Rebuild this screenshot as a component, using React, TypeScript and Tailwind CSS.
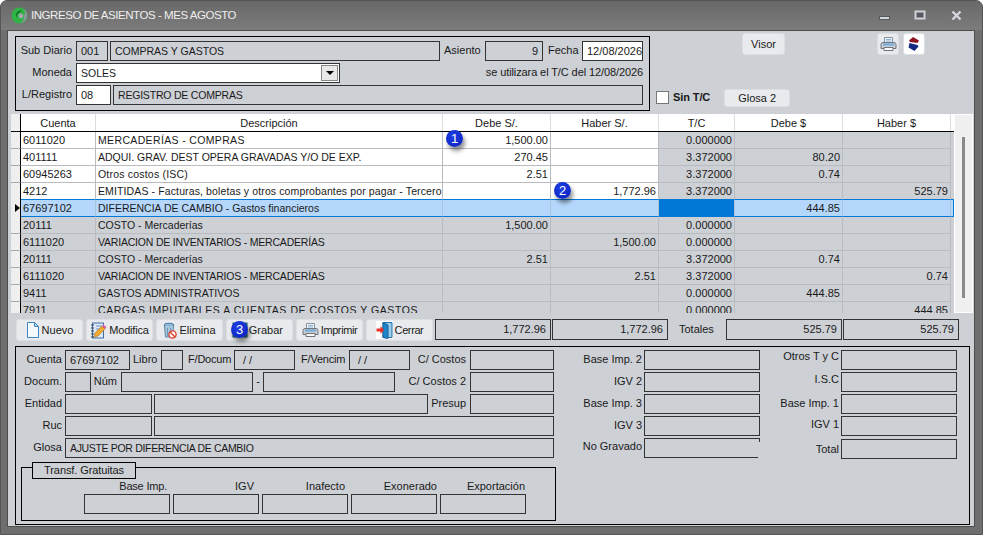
import type { ReactNode } from "react"

interface BoxProps {
  className?: string
  children?: ReactNode
}

function Box({ className = "", children }: BoxProps) {
  return (
    <div className={`flex h-5 shrink-0 items-center overflow-hidden whitespace-nowrap border border-[#333] px-1 ${className}`}>
      {children}
    </div>
  )
}

function Lbl({ className = "", children }: BoxProps) {
  return <div className={`shrink-0 -translate-y-px whitespace-nowrap ${className}`}>{children}</div>
}

function Marker({ n, className = "" }: { n: number; className?: string }) {
  return (
    <div
      className={`absolute z-10 flex h-[17px] w-[17px] items-center justify-center rounded-full bg-[radial-gradient(circle_at_40%_35%,#1d3fe6,#0a1fb8)] text-[13px] leading-none text-white shadow-[2px_4px_4px_rgba(0,0,0,0.45)] ${className}`}
    >
      {n}
    </div>
  )
}

function LogoIcon() {
  return (
    <svg width="17" height="17" viewBox="0 0 17 17">
      <circle cx="8.5" cy="8.5" r="8" fill="#2fb344" />
      <path d="M9 1a7.5 7.5 0 0 1 7 7.5A7.5 7.5 0 0 1 8 16a6 6 0 0 0 5-7 5 5 0 0 0-4-8z" fill="#8f979c" />
      <path d="M5 8a5 5 0 0 1 7-4 4 4 0 0 0-4 1.500A4 4 0 0 0 7 12a5 5 0 0 1-2-4z" fill="#0d5a2a" />
      <circle cx="10" cy="9" r="2.400" fill="#a4aaaf" />
    </svg>
  )
}

function PageIcon() {
  return (
    <svg width="14" height="16" viewBox="0 0 14 16">
      <path d="M1.500.5h7l4 4v11h-11z" fill="#f4f9fe" stroke="#3f86c6" />
      <path d="M8.500.5v4h4z" fill="#bcdcf5" stroke="#3f86c6" />
    </svg>
  )
}

function NotebookIcon() {
  return (
    <svg width="17" height="17" viewBox="0 0 17 17">
      <rect x="2.500" y="1" width="11" height="15" fill="#dbe9f6" stroke="#3c6fa8" />
      <path d="M1 3h3M1 6h3M1 9h3M1 12h3M1 15h3" stroke="#345" strokeWidth="1" />
      <path d="M6 4h6M6 7h4" stroke="#6c93bd" />
      <path d="M4 15l1-4 7-7 3 3-7 7z" fill="#f0a92e" stroke="#b0701a" strokeWidth=".6" />
      <path d="M12 4l1.500-1.500 3 3L15 7z" fill="#d65ca8" />
    </svg>
  )
}

function BinIcon() {
  return (
    <svg width="14" height="17" viewBox="0 0 14 17">
      <ellipse cx="6" cy="3" rx="5" ry="1.800" fill="#8db7d6" stroke="#4c7ea6" />
      <path d="M1.500 4l1 11h7l1-11" fill="#a9c6dc" stroke="#5b88ab" />
      <path d="M4.500 6v8M7.500 6v8" stroke="#6f97b6" />
      <circle cx="9.500" cy="12.500" r="3.600" fill="#fff" stroke="#d8412f" strokeWidth="1.400" />
      <path d="M7 10l5 5" stroke="#d8412f" strokeWidth="1.400" />
    </svg>
  )
}

function FloppyIcon() {
  return (
    <svg width="16" height="16" viewBox="0 0 16 16">
      <rect x="1" y="1" width="14" height="14" fill="#2d7f96" stroke="#1d5a70" />
      <rect x="4" y="2" width="8" height="5" fill="#e6eef2" />
      <rect x="4" y="10" width="8" height="5" fill="#49606b" />
    </svg>
  )
}

function PrinterIcon() {
  return (
    <svg width="17" height="16" viewBox="0 0 17 16">
      <path d="M4.500 7V1.500h8V7z" fill="#eef3f8" stroke="#8a949e" />
      <path d="M6 3.500h5M6 5h5" stroke="#8fb6d8" />
      <path d="M1 8.500q0-2 2-2h11q2 0 2 2v4H1z" fill="#c9cdd2" stroke="#6e757c" />
      <rect x="3" y="7.500" width="11" height="2" fill="#6fa9dc" />
      <path d="M4 11.500h9v3H4z" fill="#fbfbfb" stroke="#6e757c" />
    </svg>
  )
}

function DoorIcon() {
  return (
    <svg width="17" height="18" viewBox="0 0 17 18">
      <rect x="0" y="0" width="17" height="18" fill="#fff" />
      <path d="M7 1.500h9v15H7z" fill="#9ecbe8" stroke="#1d6fb0" />
      <path d="M7 1.500l5 2.500v13.500l-5-1z" fill="#1c86c9" stroke="#14639c" />
      <path d="M0.500 7.500h4v-2.500l3.500 4-3.500 4v-2.500h-4z" fill="#e8302a" />
    </svg>
  )
}

function SwapIcon() {
  return (
    <svg width="16" height="16" viewBox="0 0 16 16">
      <path d="M7 1l6 3.500-1.500 2.500-7.500-1-1-1.500z" fill="#8e1420" />
      <path d="M3.500 7l8 2 1 1.500-4 4.500-6-3.500z" fill="#12297f" />
    </svg>
  )
}

function ToolButton({ icon, label, labelClass = "" }: { icon: ReactNode; label: string; labelClass?: string }) {
  return (
    <button className="flex h-[22px] w-[67px] shrink-0 items-center justify-center gap-[2px] rounded-[3px] border border-[#dcdee1] bg-[#e8eaed] text-[#1a1a1a]">
      {icon}
      <span className={labelClass}>{label}</span>
    </button>
  )
}

const cols = "grid grid-cols-[10px_75px_347px_108px_108px_76px_108px_108px_3px]"

const rows = [
  ["6011020", "MERCADERÍAS - COMPRAS", "1,500.00", "", "0.000000", "", "", "tracking-[0.35px]"],
  ["401111", "ADQUI. GRAV. DEST OPERA GRAVADAS Y/O DE EXP.", "270.45", "", "3.372000", "80.20", "", ""],
  ["60945263", "Otros costos (ISC)", "2.51", "", "3.372000", "0.74", "", "tracking-[0.2px]"],
  ["4212", "EMITIDAS - Facturas, boletas y otros comprobantes por pagar - Terceros", "", "1,772.96", "3.372000", "", "525.79", "tracking-[0.12px]"],
  ["67697102", "DIFERENCIA DE CAMBIO - Gastos financieros", "", "", "", "444.85", "", ""],
  ["20111", "COSTO - Mercaderías", "1,500.00", "", "0.000000", "", "", ""],
  ["6111020", "VARIACION DE INVENTARIOS - MERCADERÍAS", "", "1,500.00", "0.000000", "", "", "tracking-[-0.2px]"],
  ["20111", "COSTO - Mercaderías", "2.51", "", "3.372000", "0.74", "", ""],
  ["6111020", "VARIACION DE INVENTARIOS - MERCADERÍAS", "", "2.51", "3.372000", "", "0.74", "tracking-[-0.2px]"],
  ["9411", "GASTOS ADMINISTRATIVOS", "", "", "0.000000", "444.85", "", ""],
  ["7911", "CARGAS IMPUTABLES A CUENTAS DE COSTOS Y GASTOS", "", "", "0.000000", "", "444.85", "tracking-[0.55px]"],
]

function GridRow({ row, index }: { row: string[]; index: number }) {
  const selected = index === 4
  const base = selected
    ? "-mt-px h-[18px] border-y border-r border-y-[#0078d7] border-r-[#a9c4dd] bg-[#b5d7fb]"
    : "h-[17px] border-b border-r border-[#b9bbbe]"
  const editable = index < 4 ? "bg-white" : selected ? "" : "bg-[#cdd0d5]"
  const gray = selected ? "" : "bg-[#cdd0d5]"
  return (
    <div className={cols}>
      <div className={`flex items-center border-r border-black bg-[#efefef] ${selected ? "-mt-px h-[18px]" : "h-[17px] border-b border-b-[#a9abae]"}`}>
        {selected && <span className="ml-[4px] h-0 w-0 border-y-[4px] border-l-[5px] border-y-transparent border-l-black" />}
      </div>
      <div className={`${base} ${editable} flex items-center pl-[2px]`}>{row[0]}</div>
      <div className={`${base} ${editable} flex items-center overflow-hidden whitespace-nowrap pl-[2px] text-[10.5px] ${row[7]}`}>{row[1]}</div>
      <div className={`relative ${base} ${editable} flex items-center justify-end pr-[2px]`}>
        {index === 0 && <Marker n={1} className="left-[3px] -top-[2px]" />}
        {row[2]}
      </div>
      <div className={`relative ${base} ${editable} flex items-center justify-end pr-[2px]`}>
        {index === 3 && <Marker n={2} className="left-[3px] -top-px" />}
        {row[3]}
      </div>
      <div className={`${base} ${selected ? "!bg-[#0078d7]" : gray} flex items-center justify-end pr-[2px]`}>{row[4]}</div>
      <div className={`${base} ${gray} flex items-center justify-end pr-[2px]`}>{row[5]}</div>
      <div className={`${base} ${gray} flex items-center justify-end pr-[2px]`}>{row[6]}</div>
      {selected && <div className="-mt-px h-[18px] border-y border-r border-[#0078d7] bg-[#b5d7fb]" />}
    </div>
  )
}

export default function App() {
  return (
    <div className="h-[535px] w-[983px] overflow-hidden bg-white font-['Liberation_Sans',Arial,sans-serif] text-[11px] leading-none text-[#1a1a1a]">
      <div className="flex h-full flex-col rounded-t-[7px] border border-[#555] bg-[#6e6e6e]">
        {/* Title bar */}
        <div className="flex h-[29px] shrink-0 items-center rounded-t-[7px] bg-gradient-to-b from-[#686868] to-[#7c7c7c] pl-[10px]">
          <LogoIcon />
          <span className="ml-[3px] text-[11.5px] tracking-[-0.45px] text-[#eeeeee]">INGRESO DE ASIENTOS - MES AGOSTO</span>
          <div className="ml-auto flex items-center">
            <svg width="90" height="12" viewBox="0 0 90 12" className="mr-[13px]">
              <rect x="0.500" y="6.500" width="10" height="3" fill="#d3d6db" stroke="#55585f" />
              <rect x="36.500" y="1.500" width="9" height="7" fill="#55585f" stroke="#cfd2d7" strokeWidth="2" />
              <path d="M73.500 1.500l8 8M81.500 1.500l-8 8" stroke="#d6d9de" strokeWidth="2.400" />
            </svg>
          </div>
        </div>

        {/* Form panel */}
        <div className="ml-[6px] flex h-[497px] w-[968px] shrink-0 flex-col border border-[#4d4d4d] bg-[#cdd0d5]">
          {/* Header section */}
          <div className="flex h-[83px] shrink-0">
            <div className="ml-[7px] mt-[5px] flex h-[75px] w-[635px] shrink-0 flex-col gap-[2px] border border-black pl-[2px] pt-1">
              <div className="flex items-center">
                <Lbl className="w-[54px] text-right">Sub Diario</Lbl>
                <Box className="ml-1 w-[32px]">001</Box>
                <Box className="ml-[2px] w-[330px] text-[10.5px]">COMPRAS Y GASTOS</Box>
                <Lbl className="ml-1 w-[37px]">Asiento</Lbl>
                <Box className="ml-1 w-[58px] justify-end">9</Box>
                <Lbl className="ml-[5px] w-[34px]">Fecha</Lbl>
                <Box className="w-[61px] bg-white">12/08/2026</Box>
              </div>
              <div className="flex items-center">
                <Lbl className="w-[54px] text-right">Moneda</Lbl>
                <div className="ml-1 flex h-5 w-[264px] items-center justify-between border border-[#333] bg-white pl-1 pr-[1px] text-[10.5px]">
                  SOLES
                  <span className="flex h-4 w-[17px] items-center justify-center border border-[#888] bg-[#e8e8e8]">
                    <span className="h-0 w-0 border-x-[4px] border-t-[4px] border-x-transparent border-t-black" />
                  </span>
                </div>
                <Lbl className="ml-auto mr-[6px] tracking-[-0.1px]">se utilizara el T/C del 12/08/2026</Lbl>
              </div>
              <div className="flex items-center">
                <Lbl className="w-[54px] text-right">L/Registro</Lbl>
                <Box className="ml-1 w-[35px] bg-white">08</Box>
                <Box className="ml-[2px] w-[530px] text-[10.5px] tracking-[-0.2px]">REGISTRO DE COMPRAS</Box>
              </div>
            </div>

            <div className="flex flex-1 flex-col pt-[2px]">
              <div className="flex h-[22px]">
                <button className="ml-[92px] h-[22px] w-[43px] rounded-[3px] border border-[#dcdee1] bg-[#e8eaed]">Visor</button>
                <button className="ml-[92px] flex h-[22px] w-[22px] items-center justify-center rounded-[3px] border border-[#dcdee1] bg-[#e8eaed]">
                  <PrinterIcon />
                </button>
                <button className="ml-1 flex h-[22px] w-[22px] items-center justify-center rounded-[3px] border border-[#dcdee1] bg-white">
                  <SwapIcon />
                </button>
              </div>
              <div className="mt-[34px] flex h-[18px] items-center">
                <div className="ml-[6px] -mt-px h-[13px] w-[13px] border border-[#777] bg-white" />
                <Lbl className="ml-1 font-bold tracking-[-0.1px]">Sin T/C</Lbl>
                <button className="ml-[14px] h-[18px] w-[66px] rounded-[3px] border border-[#dcdee1] bg-[#e8eaed]">Glosa 2</button>
              </div>
            </div>
          </div>

          {/* Detail grid */}
          <div className="ml-[3px] flex h-[199px] w-[962px] shrink-0 overflow-hidden">
            <div className="w-[943px] shrink-0">
              <div className={`${cols} h-[18px] w-[943px] border-b border-black bg-white`}>
                <div className="border-r border-black bg-[#efefef]" />
                {["Cuenta", "Descripción", "Debe S/.", "Haber S/.", "T/C", "Debe $", "Haber $"].map((title) => (
                  <div key={title} className="flex items-center justify-center border-r border-[#dddddd] pt-px">
                    {title}
                  </div>
                ))}
              </div>
              {rows.map((row, index) => (
                <GridRow key={index} row={row} index={index} />
              ))}
            </div>
            <div className="flex w-[19px] shrink-0 justify-center border border-white bg-[#f0f0f0] pt-[22px]">
              <div className="h-[161px] w-[3px] bg-[#8a8a8a]" />
            </div>
          </div>

          {/* Toolbar and totals */}
          <div className="flex h-[33px] shrink-0 items-start pl-2 pt-[6px]">
            <div className="relative flex gap-[3px]">
              <ToolButton icon={<PageIcon />} label="Nuevo" />
              <ToolButton icon={<NotebookIcon />} label="Modifica" labelClass="tracking-[-0.2px]" />
              <ToolButton icon={<BinIcon />} label="Elimina" />
              <button className="flex h-[22px] w-[67px] shrink-0 items-center justify-end rounded-[3px] border border-[#dcdee1] bg-[#e8eaed] pr-[9px]">
                <FloppyIcon />
                <span className="ml-[1px]">Grabar</span>
              </button>
              <ToolButton icon={<PrinterIcon />} label="Imprimir" labelClass="tracking-[-0.4px]" />
              <ToolButton icon={<DoorIcon />} label="Cerrar" labelClass="tracking-[-0.4px]" />
              <Marker n={3} className="left-[215px] top-[2px]" />
            </div>
            <Box className="ml-[2px] h-[21px] w-[116px] justify-end">1,772.96</Box>
            <Box className="ml-px h-[21px] w-[116px] justify-end">1,772.96</Box>
            <Lbl className="ml-[11px] mt-[6px] w-[47px]">Totales</Lbl>
            <Box className="h-[21px] w-[116px] justify-end">525.79</Box>
            <Box className="ml-px h-[21px] w-[116px] justify-end">525.79</Box>
          </div>

          {/* Entry detail */}
          <div className="ml-[7px] flex h-[179px] w-[955px] shrink-0 border border-black">
            <div className="flex w-[540px] shrink-0 flex-col gap-[2px] pt-[3px]">
              <div className="flex items-center">
                <Lbl className="w-[46px] text-right">Cuenta</Lbl>
                <Box className="ml-[3px] w-[65px]">67697102</Box>
                <Lbl className="ml-[3px] w-[28px]">Libro</Lbl>
                <Box className="w-[22px]" />
                <Lbl className="ml-[5px] w-[46px] tracking-[-0.2px]">F/Docum</Lbl>
                <Box className="w-[61px] pl-2">/ /</Box>
                <Lbl className="ml-[6px] w-[48px] tracking-[-0.2px]">F/Vencim</Lbl>
                <Box className="w-[61px] pl-2">/ /</Box>
                <Lbl className="w-[56px] text-right">C/ Costos</Lbl>
                <Box className="ml-1 w-[84px]" />
              </div>
              <div className="flex items-center">
                <Lbl className="w-[46px] text-right">Docum.</Lbl>
                <Box className="ml-[3px] w-[26px]" />
                <Lbl className="w-[26px] text-right">Núm</Lbl>
                <Box className="ml-1 w-[132px]" />
                <Lbl className="w-[10px] text-center">-</Lbl>
                <Box className="w-[132px]" />
                <Lbl className="w-[71px] text-right">C/ Costos 2</Lbl>
                <Box className="ml-1 w-[84px]" />
              </div>
              <div className="flex items-center">
                <Lbl className="w-[46px] text-right">Entidad</Lbl>
                <Box className="ml-[3px] w-[87px]" />
                <Box className="ml-[2px] w-[274px]" />
                <Lbl className="w-[38px] text-right">Presup</Lbl>
                <Box className="ml-1 w-[84px]" />
              </div>
              <div className="flex items-center">
                <Lbl className="w-[46px] text-right">Ruc</Lbl>
                <Box className="ml-[3px] w-[87px]" />
                <Box className="ml-[2px] w-[400px]" />
              </div>
              <div className="flex items-center">
                <Lbl className="w-[46px] text-right">Glosa</Lbl>
                <Box className="ml-[3px] w-[489px] text-[10.5px] tracking-[-0.33px]">AJUSTE POR DIFERENCIA DE CAMBIO</Box>
              </div>

              {/* Transf. Gratuitas */}
              <div className="relative ml-[5px] mt-[7px] h-[54px] w-[535px] border border-black">
                <div className="absolute -top-[6px] left-[10px] flex h-[17px] w-[104px] items-center justify-center border border-black bg-[#cdd0d5] tracking-[-0.1px]">
                  Transf. Gratuitas
                </div>
                <div className="ml-[62px] mt-[14px] grid w-[442px] grid-cols-5 gap-x-[3px] gap-y-[1px]">
                  <Lbl className="pr-[3px] text-right tracking-[-0.2px]">Base Imp.</Lbl>
                  <Lbl className="pr-[5px] text-right">IGV</Lbl>
                  <Lbl className="pr-[3px] text-right">Inafecto</Lbl>
                  <Lbl className="text-right">Exonerado</Lbl>
                  <Lbl className="pr-px text-right">Exportación</Lbl>
                  <Box />
                  <Box />
                  <Box />
                  <Box />
                  <Box />
                </div>
              </div>
            </div>

            <div className="ml-[88px] flex w-[116px] shrink-0 flex-col gap-[2px] pt-[3px]">
              <Box />
              <Box />
              <Box />
              <Box />
              <div className="relative h-5 w-[114px] border border-r-0 border-[#333]">
                <span className="absolute -right-[2px] -top-px h-1 w-[2px] border-r border-t border-[#333]" />
              </div>
            </div>
            <div className="relative -ml-[116px] flex w-[116px] shrink-0 flex-col gap-[2px] pt-[3px]">
              {["Base Imp. 2", "IGV 2", "Base Imp. 3", "IGV 3", "No Gravado"].map((label) => (
                <div key={label} className="relative flex h-5 items-center">
                  <Lbl className={`absolute right-[118px] ${label === "No Gravado" ? "-mt-[2px]" : ""}`}>{label}</Lbl>
                </div>
              ))}
            </div>

            <div className="ml-[81px] flex w-[116px] shrink-0 flex-col gap-[2px] pt-[3px]">
              {[
                ["Otros T y C", "-mt-[2px]"],
                ["I.S.C", "-mt-px"],
                ["Base Imp. 1", "mt-px"],
                ["IGV 1", ""],
                ["Total", "mt-[2px]"],
              ].map(([label, offset]) => (
                <div key={label} className={`relative ${label === "Total" ? "mt-px" : ""}`}>
                  <Lbl className={`absolute right-[118px] top-[4px] ${offset}`}>{label}</Lbl>
                  <Box className="w-[116px]" />
                </div>
              ))}
            </div>
          </div>
        </div>
      </div>
    </div>
  )
}
